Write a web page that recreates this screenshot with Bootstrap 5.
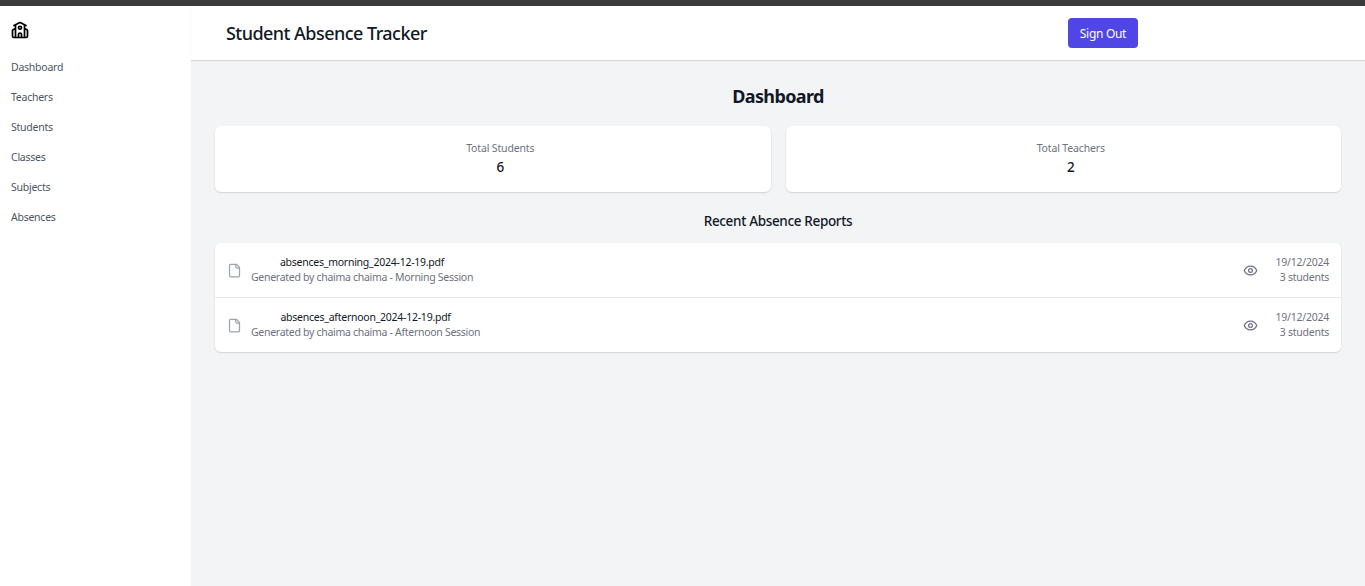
<!DOCTYPE html>
<html lang="en">
<head>
<meta charset="utf-8">
<meta name="viewport" content="width=device-width, initial-scale=1">
<title>Student Absence Tracker</title>
<link href="https://cdn.jsdelivr.net/npm/bootstrap@5.3.0/dist/css/bootstrap.min.css" rel="stylesheet">
<style>
body{font-family:"Noto Sans","Open Sans",sans-serif;font-size:10.5px;line-height:15px;color:#111827;background:#f3f4f6;height:100vh;overflow:hidden}
svg{fill:none;stroke:currentColor;stroke-width:2;stroke-linecap:round;stroke-linejoin:round;flex:none}
.topline{height:6px;background:#3b3b3b}
.side{width:191px;padding:15px 11px}
.side .nav-link{color:#4b5563;padding:0;line-height:15px;letter-spacing:-.25px}
.logo{color:#000;stroke-width:2.3}
.links{gap:15px;margin-top:21px}
.bar{height:54px;padding:0 227px 0 35px;box-shadow:0 1px 1px rgba(0,0,0,.12)}
.brand{font-size:18px;line-height:27px;font-weight:500;letter-spacing:-.54px}
.btn-out{background:#4f46e5;color:#fff;font-size:12px;line-height:18px;width:70px;height:30px;padding:2px 0 0;border:0;border-radius:4px;letter-spacing:-.3px}
.btn-out:hover{background:#4338ca;color:#fff}
.page{padding:24px 24px 0}
.page-title{font-size:18px;line-height:24px;font-weight:700;letter-spacing:-.65px;margin-bottom:18px}
.section-title{font-size:13.5px;line-height:21px;font-weight:500;letter-spacing:-.34px;margin:19px 0 11px}
.tiles{gap:15px}
.tile{height:66px;padding:15px 0 0 15px;letter-spacing:-.15px}
.tile,.reports{background:#fff;border-radius:6px;box-shadow:0 1px 2px rgba(0,0,0,.14)}
.tile,.meta{color:#6b7280}
.num{font-size:13.5px;line-height:21px;color:#111827;margin-top:1px;font-weight:500}
.rep{height:54px;padding:0 12px}
.rep+.rep{height:55px;border-top:1px solid #e5e7eb}
.rep>svg{color:#9ca3af}
.rep .eye{color:#6b7280}
.info{margin-left:9px}
.file-name{letter-spacing:-.25px}
.meta{letter-spacing:-.29px}
.stamp{letter-spacing:-.24px;width:71px}
</style>
</head>
<body class="d-flex flex-column">
<div class="topline"></div>
<div class="d-flex flex-grow-1">
<nav class="side bg-white">
<svg width="18" height="18" viewBox="0 0 24 24" class="logo d-block"><path d="M14 22v-4a2 2 0 1 0-4 0v4M18 10l3.447 1.724a1 1 0 0 1 .553.894V20a2 2 0 0 1-2 2H4a2 2 0 0 1-2-2v-7.382a1 1 0 0 1 .553-.894L6 10M18 5v17M4 6l7.106-3.553a2 2 0 0 1 1.788 0L20 6M6 5v17"/><circle cx="12" cy="9" r="2"/></svg>
<div class="nav flex-column links">
<a class="nav-link" href="#">Dashboard</a>
<a class="nav-link" href="#">Teachers</a>
<a class="nav-link" href="#">Students</a>
<a class="nav-link" href="#">Classes</a>
<a class="nav-link" href="#">Subjects</a>
<a class="nav-link" href="#">Absences</a>
</div>
</nav>
<div class="flex-grow-1">
<header class="bar bg-white d-flex align-items-center justify-content-between">
<span class="brand">Student Absence Tracker</span>
<button class="btn btn-out" type="button">Sign Out</button>
</header>
<main class="page text-center">
<h2 class="page-title">Dashboard</h2>
<div class="tiles d-flex">
<div class="tile flex-fill w-50">Total Students<div class="num">6</div></div>
<div class="tile flex-fill w-50">Total Teachers<div class="num">2</div></div>
</div>
<h3 class="section-title">Recent Absence Reports</h3>
<div class="reports">
<div class="rep d-flex align-items-center">
<svg width="15" height="15" viewBox="0 0 24 24"><path d="M15 2H6a2 2 0 0 0-2 2v16a2 2 0 0 0 2 2h12a2 2 0 0 0 2-2V7ZM14 2v4a2 2 0 0 0 2 2h4"/></svg>
<div class="info"><div class="file-name">absences_morning_2024-12-19.pdf</div><div class="meta">Generated by chaima chaima - Morning Session</div></div>
<svg class="eye ms-auto" width="15" height="15" viewBox="0 0 24 24"><path d="M2 12s3-7 10-7 10 7 10 7-3 7-10 7-10-7-10-7Z"/><circle cx="12" cy="12" r="3"/></svg>
<div class="meta stamp text-end"><div>19/12/2024</div><div>3 students</div></div>
</div>
<div class="rep d-flex align-items-center">
<svg width="15" height="15" viewBox="0 0 24 24"><path d="M15 2H6a2 2 0 0 0-2 2v16a2 2 0 0 0 2 2h12a2 2 0 0 0 2-2V7ZM14 2v4a2 2 0 0 0 2 2h4"/></svg>
<div class="info"><div class="file-name">absences_afternoon_2024-12-19.pdf</div><div class="meta">Generated by chaima chaima - Afternoon Session</div></div>
<svg class="eye ms-auto" width="15" height="15" viewBox="0 0 24 24"><path d="M2 12s3-7 10-7 10 7 10 7-3 7-10 7-10-7-10-7Z"/><circle cx="12" cy="12" r="3"/></svg>
<div class="meta stamp text-end"><div>19/12/2024</div><div>3 students</div></div>
</div>
</div>
</main>
</div>
</div>
<script src="https://cdn.jsdelivr.net/npm/bootstrap@5.3.0/dist/js/bootstrap.bundle.min.js"></script>
</body>
</html>
